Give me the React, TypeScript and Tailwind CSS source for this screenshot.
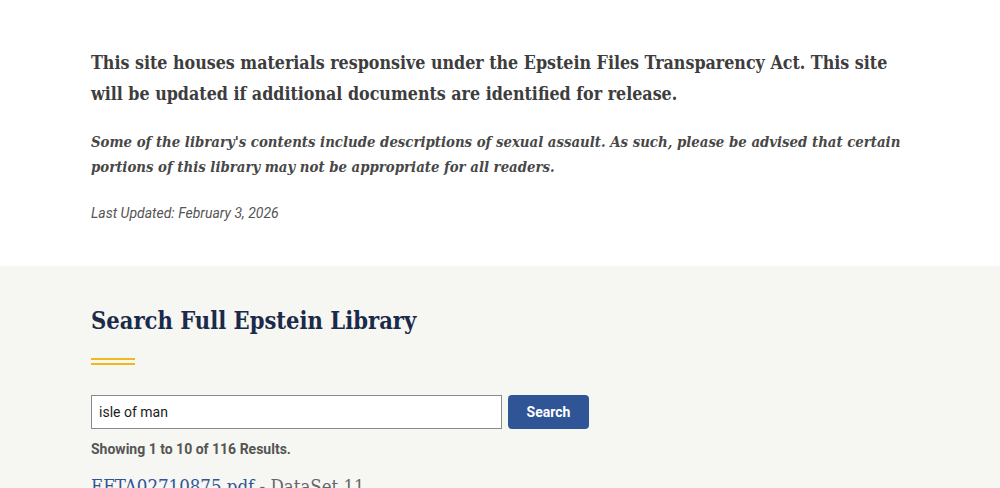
const serif = "font-['DejaVu_Serif_Condensed','DejaVu_Serif',serif]";

export default function App() {
  return (
    <div className="min-h-[488px] w-full bg-white">
      <section className="bg-white px-[91px] pt-[47px] pb-[43px]">
        <div className="max-w-[820px]">
          <p className={`${serif} text-[17.7px] font-bold leading-[31px] text-[#3d3d3d]`}>
            This site houses materials responsive under the Epstein Files Transparency Act. This site
            will be updated if additional documents are identified for release.
          </p>
          <p className={`mt-[20px] ${serif} text-[14.8px] font-bold italic leading-[25px] text-[#474747]`}>
            Some of the library's contents include descriptions of sexual assault. As such, please be
            advised that certain portions of this library may not be appropriate for all readers.
          </p>
          <p className="mt-[24px] font-['Roboto',sans-serif] text-[14px] italic leading-[20px] text-[#555555]">
            Last Updated: February 3, 2026
          </p>
        </div>
      </section>

      <section className="bg-[#f6f6f2] px-[91px] pt-[38px] pb-[40px]">
        <h2 className={`${serif} text-[23.5px] font-bold leading-[34px] text-[#1b2a4a]`}>
          Search Full Epstein Library
        </h2>
        <div className="mt-[20px] flex w-[44px] flex-col gap-[3px]">
          <div className="h-[2px] bg-[#f2b91c]" />
          <div className="h-[2px] bg-[#f2b91c]" />
        </div>

        <form className="mt-[30px] flex items-stretch gap-[6px]" onSubmit={(e) => e.preventDefault()}>
          <input
            type="text"
            defaultValue="isle of man"
            className="h-[34px] w-[411px] border border-[#8a8a8a] bg-white px-[7px] font-['Roboto',sans-serif] text-[14px] text-[#1b1b1b] outline-none"
          />
          <button
            type="submit"
            className="h-[34px] w-[81px] rounded-[4px] bg-[#2f5597] font-['Roboto',sans-serif] text-[14px] font-bold text-white"
          >
            Search
          </button>
        </form>

        <p className="mt-[10px] font-['Roboto',sans-serif] text-[14px] font-bold leading-[20px] text-[#555555]">
          Showing 1 to 10 of 116 Results.
        </p>

        <div className={`mt-[14px] ${serif} text-[18.5px] leading-[28px]`}>
          <a href="#" className="text-[#2f5597] underline">
            EFTA02710875.pdf
          </a>
          <span className="text-[#666666]"> - DataSet 11</span>
        </div>
      </section>
    </div>
  );
}
